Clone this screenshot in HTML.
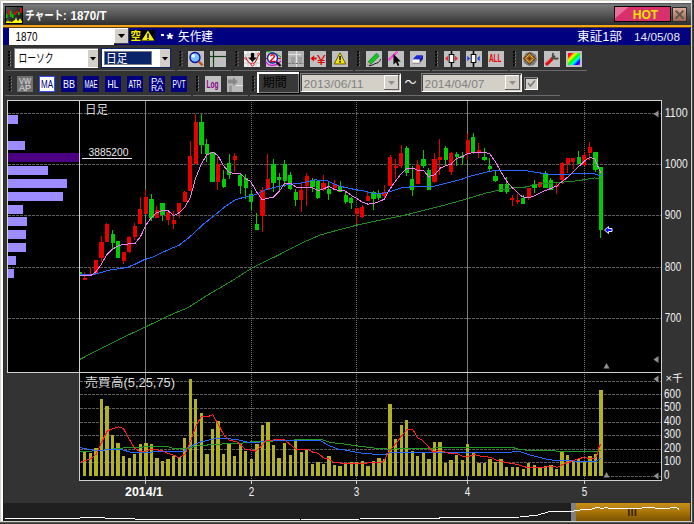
<!DOCTYPE html>
<html lang="ja"><head><meta charset="utf-8"><title>チャート: 1870/T</title>
<style>
html,body{margin:0;padding:0;background:#333;overflow:hidden}
svg{display:block}
.t{font-family:"Liberation Sans","Noto Sans CJK JP",sans-serif;}
</style></head><body>
<svg width="694" height="524" viewBox="0 0 694 524">
<rect x="0" y="0" width="694" height="524" fill="#d4d0c8" />
<rect x="1" y="1" width="691" height="521" fill="#ffffff" />
<rect x="3" y="3" width="688" height="518" fill="#333333" />
<rect x="691" y="0" width="3" height="524" fill="#d4d0c8" />
<rect x="0" y="521" width="694" height="3" fill="#d4d0c8" />
<rect x="692" y="0" width="1" height="524" fill="#484848" />
<rect x="693" y="0" width="1" height="524" fill="#303030" />
<rect x="0" y="522" width="694" height="1" fill="#585858" />
<rect x="0" y="523" width="694" height="1" fill="#303030" />
<rect x="690" y="3" width="1" height="518" fill="#2a2a2a" />
<rect x="3" y="3" width="1" height="518" fill="#2a2a2a" />
<defs><linearGradient id="tg" x1="0" y1="0" x2="0" y2="1"><stop offset="0" stop-color="#4a4a4a"/><stop offset="0.08" stop-color="#7a7a7a"/><stop offset="0.5" stop-color="#585858"/><stop offset="1" stop-color="#2e2e2e"/></linearGradient><linearGradient id="gold" x1="0" y1="0" x2="0" y2="1"><stop offset="0" stop-color="#c89018"/><stop offset="0.5" stop-color="#a87408"/><stop offset="1" stop-color="#7a5200"/></linearGradient><linearGradient id="rb" x1="0" y1="0" x2="1" y2="1"><stop offset="0" stop-color="#ff00c0"/><stop offset="0.15" stop-color="#ff0000"/><stop offset="0.32" stop-color="#ffff00"/><stop offset="0.5" stop-color="#00ff00"/><stop offset="0.65" stop-color="#00ffff"/><stop offset="0.82" stop-color="#0000ff"/><stop offset="1" stop-color="#ff00ff"/></linearGradient><linearGradient id="ig" x1="0" y1="0" x2="1" y2="1"><stop offset="0" stop-color="#555"/><stop offset="1" stop-color="#111"/></linearGradient></defs>
<rect x="3" y="3" width="688" height="22" fill="url(#tg)" />
<rect x="3" y="25" width="688" height="2" fill="#f0a418" />
<rect x="5" y="6" width="18" height="18" fill="#000" />
<rect x="6" y="7" width="16" height="16" fill="url(#ig)" />
<rect x="6" y="14" width="1.5" height="4" fill="#0c0" />
<rect x="8" y="10" width="1.5" height="5" fill="#f00" />
<rect x="10" y="11" width="1.5" height="6" fill="#0c0" />
<rect x="12" y="14" width="1.5" height="4" fill="#0c0" />
<rect x="14" y="12" width="1.5" height="3" fill="#f00" />
<rect x="16" y="11" width="1.5" height="2" fill="#f00" />
<rect x="18" y="12" width="1.5" height="3" fill="#0c0" />
<rect x="20" y="8" width="1.5" height="5" fill="#f00" />
<path d="M6,23 L6,21 L7,22 L8,20 L9,22 L10,21 L11,22 L12,22 L13,21 L15,20 L16,17 L17,20 L18,21 L19,20 L20,18 L21,20 L22,21 L22,23 Z" fill="#ff0"/>
<text class="t" x="25.3" y="19.8" font-size="12" fill="#fff" textLength="41" lengthAdjust="spacingAndGlyphs" font-weight="bold" >チャート:</text>
<text class="t" x="70.5" y="19.6" font-size="12" fill="#fff" textLength="36" lengthAdjust="spacingAndGlyphs" font-weight="bold" >1870/T</text>
<rect x="614" y="6" width="57" height="16" fill="#000" />
<rect x="615" y="7" width="55" height="14" fill="#d8306c" />
<path d="M615,7 L628.5,7 L615,18.5 Z" fill="#e8709a"/>
<text class="t" x="645.5" y="18.5" font-size="12" fill="#e8e400" textLength="25.5" lengthAdjust="spacingAndGlyphs" text-anchor="middle" font-weight="bold" >HOT</text>
<linearGradient id="cb" x1="0" y1="0" x2="0" y2="1"><stop offset="0" stop-color="#dcaa9c"/><stop offset="1" stop-color="#a06454"/></linearGradient>
<rect x="672" y="7" width="15" height="15" fill="#2c2c2c" />
<rect x="673" y="8" width="13" height="13" fill="url(#cb)" />
<path d="M675.7,10.6 L683.5,18.6 M683.5,10.6 L675.7,18.6" stroke="#5a5848" stroke-width="2" fill="none"/>
<rect x="3" y="27" width="687" height="18" fill="#000080" />
<rect x="3" y="27" width="687" height="1" fill="#604010" />
<rect x="9" y="28" width="105" height="17" fill="#fff" />
<text class="t" x="15.5" y="40.5" font-size="12.5" fill="#000" textLength="22" lengthAdjust="spacingAndGlyphs" >1870</text>
<rect x="114" y="28" width="15" height="16" fill="#d4d0c8" />
<rect x="114" y="28" width="15" height="1" fill="#fff" />
<rect x="114" y="28" width="1" height="16" fill="#fff" />
<rect x="128" y="28" width="1" height="16" fill="#404040" />
<rect x="114" y="43" width="15" height="1" fill="#404040" />
<path d="M118,34 L125,34 L121.5,38 Z" fill="#000"/>
<rect x="130" y="30" width="25" height="11" fill="#000" />
<text class="t" x="130.6" y="40" font-size="11" fill="#f4f000" textLength="10.5" lengthAdjust="spacingAndGlyphs" font-weight="bold" >空</text>
<path d="M147.9,30.5 L154.4,40.6 L141.6,40.6 Z" fill="#f4f000"/>
<rect x="147.2" y="33.6" width="1.6" height="4.5" fill="#000" />
<rect x="147.2" y="38.9" width="1.6" height="1.3" fill="#000" />
<rect x="161" y="34" width="3" height="2" fill="#fff" />
<text class="t" x="166.6" y="45.3" font-size="17" fill="#fff" font-weight="bold" >*</text>
<text class="t" x="178" y="40.5" font-size="12" fill="#fff" textLength="35" lengthAdjust="spacingAndGlyphs" >矢作建</text>
<text class="t" x="577" y="40.5" font-size="12" fill="#fff" textLength="45" lengthAdjust="spacingAndGlyphs" >東証1部</text>
<text class="t" x="634" y="40.5" font-size="11.5" fill="#e8e8e8" textLength="46" lengthAdjust="spacingAndGlyphs" >14/05/08</text>
<rect x="8.0" y="51.0" width="2" height="2" fill="#000" />
<rect x="10.0" y="51.6" width="0.9" height="1.8" fill="#8a8a8a" />
<rect x="8.0" y="54.2" width="2" height="2" fill="#000" />
<rect x="10.0" y="54.800000000000004" width="0.9" height="1.8" fill="#8a8a8a" />
<rect x="8.0" y="57.4" width="2" height="2" fill="#000" />
<rect x="10.0" y="58.0" width="0.9" height="1.8" fill="#8a8a8a" />
<rect x="8.0" y="60.6" width="2" height="2" fill="#000" />
<rect x="10.0" y="61.2" width="0.9" height="1.8" fill="#8a8a8a" />
<rect x="8.0" y="63.8" width="2" height="2" fill="#000" />
<rect x="10.0" y="64.39999999999999" width="0.9" height="1.8" fill="#8a8a8a" />
<rect x="14" y="48" width="84" height="20" fill="#fff" />
<rect x="14" y="48" width="84" height="1" fill="#808080" />
<rect x="14" y="48" width="1" height="20" fill="#808080" />
<text class="t" x="18.5" y="63" font-size="12" fill="#000" textLength="35" lengthAdjust="spacingAndGlyphs" >ローソク</text>
<rect x="88" y="50" width="10" height="17" fill="#d4d0c8" />
<path d="M90,57 L96,57 L93,60.5 Z" fill="#000"/>
<rect x="101" y="48" width="70" height="20" fill="#0a246a" />
<rect x="102" y="49" width="68" height="18" fill="#fff" />
<rect x="104" y="51" width="48" height="14" fill="#0a246a" />
<rect x="104.5" y="51.5" width="47" height="13" fill="none" stroke="#e8d8a0" stroke-width="1" stroke-dasharray="1 1"/>
<text class="t" x="106" y="62.5" font-size="12" fill="#fff" textLength="21.5" lengthAdjust="spacingAndGlyphs" >日足</text>
<rect x="160" y="49" width="10" height="18" fill="#d4d0c8" />
<path d="M162,57 L168,57 L165,60.5 Z" fill="#000"/>
<rect x="179.5" y="51.0" width="2" height="2" fill="#000" />
<rect x="181.5" y="51.6" width="0.9" height="1.8" fill="#8a8a8a" />
<rect x="179.5" y="54.2" width="2" height="2" fill="#000" />
<rect x="181.5" y="54.800000000000004" width="0.9" height="1.8" fill="#8a8a8a" />
<rect x="179.5" y="57.4" width="2" height="2" fill="#000" />
<rect x="181.5" y="58.0" width="0.9" height="1.8" fill="#8a8a8a" />
<rect x="179.5" y="60.6" width="2" height="2" fill="#000" />
<rect x="181.5" y="61.2" width="0.9" height="1.8" fill="#8a8a8a" />
<rect x="179.5" y="63.8" width="2" height="2" fill="#000" />
<rect x="181.5" y="64.39999999999999" width="0.9" height="1.8" fill="#8a8a8a" />
<g transform="translate(0,1)">
<rect x="188" y="50" width="16" height="16" fill="#c0c0c0" />
<circle cx="195" cy="56.5" r="5" fill="#78c0ff" stroke="#0808a0" stroke-width="1.3"/><circle cx="193.3" cy="54.8" r="1.9" fill="#e0f4ff"/><path d="M198.8,60.5 L202.5,64.3" stroke="#c05010" stroke-width="2.4"/>
<rect x="210" y="50" width="16" height="16" fill="#c0c0c0" />
<line x1="213.5" y1="50" x2="213.5" y2="66" stroke="#0c4010" stroke-width="1.2" />
<line x1="210" y1="55.5" x2="226" y2="55.5" stroke="#0c4010" stroke-width="1.2" />
</g>
<rect x="235.5" y="51.0" width="2" height="2" fill="#000" />
<rect x="237.5" y="51.6" width="0.9" height="1.8" fill="#8a8a8a" />
<rect x="235.5" y="54.2" width="2" height="2" fill="#000" />
<rect x="237.5" y="54.800000000000004" width="0.9" height="1.8" fill="#8a8a8a" />
<rect x="235.5" y="57.4" width="2" height="2" fill="#000" />
<rect x="237.5" y="58.0" width="0.9" height="1.8" fill="#8a8a8a" />
<rect x="235.5" y="60.6" width="2" height="2" fill="#000" />
<rect x="237.5" y="61.2" width="0.9" height="1.8" fill="#8a8a8a" />
<rect x="235.5" y="63.8" width="2" height="2" fill="#000" />
<rect x="237.5" y="64.39999999999999" width="0.9" height="1.8" fill="#8a8a8a" />
<g transform="translate(0,1)">
<rect x="244" y="50" width="16" height="16" fill="#f0f0f0" />
<line x1="244" y1="54" x2="260" y2="54" stroke="#b8b8b8" stroke-width="0.7" />
<line x1="248" y1="50" x2="248" y2="66" stroke="#b8b8b8" stroke-width="0.7" />
<line x1="244" y1="58" x2="260" y2="58" stroke="#b8b8b8" stroke-width="0.7" />
<line x1="252" y1="50" x2="252" y2="66" stroke="#b8b8b8" stroke-width="0.7" />
<line x1="244" y1="62" x2="260" y2="62" stroke="#b8b8b8" stroke-width="0.7" />
<line x1="256" y1="50" x2="256" y2="66" stroke="#b8b8b8" stroke-width="0.7" />
<path d="M245.5,57 Q250,64 252.5,63.5 Q256,62 259,52.5" stroke="#c00000" stroke-width="1" fill="none"/><path d="M250.8,52 L254.2,52 L254.2,56.5 L256.8,56.5 L252.5,61 L248.2,56.5 L250.8,56.5 Z" fill="#000"/><circle cx="252.6" cy="63.5" r="1.4" fill="#fff" stroke="#e00000" stroke-width="0.9"/><circle cx="245.6" cy="57" r="1" fill="#fff" stroke="#c00000" stroke-width="0.7"/><circle cx="258.6" cy="53" r="1" fill="#fff" stroke="#c00000" stroke-width="0.7"/>
<rect x="266" y="50" width="16" height="16" fill="#c0c0c0" />
<path d="M266,50.5 C270,50.5 276,52 281,56" stroke="#00a000" stroke-width="1" fill="none"/><path d="M266,57.5 L281,57.5" stroke="#e00000" stroke-width="0.9"/><path d="M266,61 C269,65.5 275,66 281,60" stroke="#e000e0" stroke-width="1.2" fill="none"/><circle cx="272.5" cy="57" r="5" fill="#f8f8ff" stroke="#1020b0" stroke-width="1.4"/><path d="M276.5,61 L280.5,65" stroke="#101010" stroke-width="2.4"/>
<text class="t" x="272.6" y="61" font-size="10.5" fill="#e00000" text-anchor="middle" font-weight="bold" >2</text>
<rect x="288" y="50" width="16" height="16" fill="#b4b4b4" />
<rect x="291" y="56" width="4" height="6" fill="#a0a0a0" />
<rect x="298" y="56" width="4" height="6" fill="#a0a0a0" />
<line x1="296.5" y1="50" x2="296.5" y2="66" stroke="#e4e4e4" stroke-width="1.1" />
<line x1="288.5" y1="53.5" x2="301" y2="53.5" stroke="#e4e4e4" stroke-width="1.1" />
<line x1="288.5" y1="62.5" x2="303.5" y2="62.5" stroke="#707070" stroke-width="1.2" stroke-dasharray="2.5 1"/>
<rect x="310" y="50" width="16" height="16" fill="#c0c0c0" />
<path d="M310.5,57.5 L314,54.5 L314,56.5 L316.5,56.5 L316.5,58.5 L314,58.5 L314,60.5 Z" fill="#e00000"/>
<text class="t" x="321.3" y="64.2" font-size="15.5" fill="#e00000" textLength="8.5" lengthAdjust="spacingAndGlyphs" text-anchor="middle" >¥</text>
<rect x="332" y="50" width="16" height="16" fill="#c0c0c0" />
<path d="M340,51.8 L345.8,63 L334.2,63 Z" fill="#f0e800" stroke="#706000" stroke-width="1" stroke-linejoin="round"/>
<rect x="339.3" y="55" width="1.5" height="4.2" fill="#000" />
<rect x="339.3" y="60" width="1.5" height="1.5" fill="#000" />
</g>
<rect x="357.2" y="51.0" width="2" height="2" fill="#000" />
<rect x="359.2" y="51.6" width="0.9" height="1.8" fill="#8a8a8a" />
<rect x="357.2" y="54.2" width="2" height="2" fill="#000" />
<rect x="359.2" y="54.800000000000004" width="0.9" height="1.8" fill="#8a8a8a" />
<rect x="357.2" y="57.4" width="2" height="2" fill="#000" />
<rect x="359.2" y="58.0" width="0.9" height="1.8" fill="#8a8a8a" />
<rect x="357.2" y="60.6" width="2" height="2" fill="#000" />
<rect x="359.2" y="61.2" width="0.9" height="1.8" fill="#8a8a8a" />
<rect x="357.2" y="63.8" width="2" height="2" fill="#000" />
<rect x="359.2" y="64.39999999999999" width="0.9" height="1.8" fill="#8a8a8a" />
<g transform="translate(0,1)">
<rect x="366" y="50" width="16" height="16" fill="#c0c0c0" />
<path d="M368.2,60.8 L376.5,52.2 L379.2,55 L370.8,63.4 Z" fill="#10c820" stroke="#108018" stroke-width="0.7"/><path d="M368.2,60.8 L370.8,63.4 L367.6,64.2 Z" fill="#f0c0b0" stroke="#604040" stroke-width="0.4"/><path d="M368.9,64.8 C372,65 374,62.5 377,62 C379,61.5 380,60 380.6,58" stroke="#101010" stroke-width="0.9" fill="none"/>
<rect x="388" y="50" width="16" height="16" fill="#c0c0c0" />
<path d="M388.3,59.3 L397.4,50.6" stroke="#ff20e0" stroke-width="2"/><path d="M388.3,59.3 L397.4,50.6" stroke="#fff" stroke-width="0.6" stroke-dasharray="1 1.2"/><path d="M393.5,53 L393.5,63.6 L396,61.2 L397.8,65 L399.3,64.3 L397.6,60.6 L400.8,60.6 Z" fill="#000"/>
<rect x="410" y="50" width="16" height="16" fill="#c0c0c0" />
<path d="M412.7,58.6 L416.5,54.2 L423,54.2 L419.5,58.6 Z" fill="#1828d8"/><path d="M419.5,58.6 L423,54.2 L423,57.8 L419.5,61.9 Z" fill="#0c1490"/><rect x="412.7" y="58.6" width="6.8" height="3.3" fill="#fff"/><path d="M412.7,62.3 L419.5,62.3 L423,58.2" stroke="#707070" stroke-width="0.7" fill="none"/>
</g>
<rect x="435.1" y="51.0" width="2" height="2" fill="#000" />
<rect x="437.1" y="51.6" width="0.9" height="1.8" fill="#8a8a8a" />
<rect x="435.1" y="54.2" width="2" height="2" fill="#000" />
<rect x="437.1" y="54.800000000000004" width="0.9" height="1.8" fill="#8a8a8a" />
<rect x="435.1" y="57.4" width="2" height="2" fill="#000" />
<rect x="437.1" y="58.0" width="0.9" height="1.8" fill="#8a8a8a" />
<rect x="435.1" y="60.6" width="2" height="2" fill="#000" />
<rect x="437.1" y="61.2" width="0.9" height="1.8" fill="#8a8a8a" />
<rect x="435.1" y="63.8" width="2" height="2" fill="#000" />
<rect x="437.1" y="64.39999999999999" width="0.9" height="1.8" fill="#8a8a8a" />
<g transform="translate(0,1)">
<rect x="444" y="50" width="16" height="16" fill="#c0c0c0" />
<line x1="451.5" y1="50" x2="451.5" y2="66" stroke="#000" stroke-width="1.6" />
<rect x="449.2" y="53.5" width="4.6" height="8" fill="#fff" stroke="#000" stroke-width="1"/>
<path d="M445,57.5 L448,54.8 L448,60.2 Z" fill="#ff2020"/><path d="M458,57.5 L455,54.8 L455,60.2 Z" fill="#ff2020"/>
<rect x="466" y="50" width="16" height="16" fill="#c0c0c0" />
<line x1="473.5" y1="50" x2="473.5" y2="66" stroke="#000" stroke-width="1.6" />
<rect x="471.2" y="53.5" width="4.6" height="8" fill="#fff" stroke="#000" stroke-width="1"/>
<path d="M470,57.5 L467.2,54.8 L467.2,60.2 Z" fill="#2040ff"/><path d="M477,57.5 L479.8,54.8 L479.8,60.2 Z" fill="#2040ff"/>
<rect x="488" y="50" width="16" height="16" fill="#c0c0c0" />
<text class="t" x="495.2" y="61.3" font-size="10.2" fill="#f00000" textLength="12.5" lengthAdjust="spacingAndGlyphs" text-anchor="middle" font-weight="bold" >ALL</text>
</g>
<rect x="513.0" y="51.0" width="2" height="2" fill="#000" />
<rect x="515.0" y="51.6" width="0.9" height="1.8" fill="#8a8a8a" />
<rect x="513.0" y="54.2" width="2" height="2" fill="#000" />
<rect x="515.0" y="54.800000000000004" width="0.9" height="1.8" fill="#8a8a8a" />
<rect x="513.0" y="57.4" width="2" height="2" fill="#000" />
<rect x="515.0" y="58.0" width="0.9" height="1.8" fill="#8a8a8a" />
<rect x="513.0" y="60.6" width="2" height="2" fill="#000" />
<rect x="515.0" y="61.2" width="0.9" height="1.8" fill="#8a8a8a" />
<rect x="513.0" y="63.8" width="2" height="2" fill="#000" />
<rect x="515.0" y="64.39999999999999" width="0.9" height="1.8" fill="#8a8a8a" />
<g transform="translate(0,1)">
<rect x="522" y="50" width="16" height="16" fill="#c0c0c0" />
<path d="M526,52 L531,51 L536,54 L537,59 L534,64 L529,65 L524,62 L523,57 Z" fill="#707880"/><path d="M529.5,51.5 L535.5,57.5 L529.5,63.5 L523.5,57.5 Z" fill="#a06018" stroke="#583008" stroke-width="0.8"/><path d="M526.5,54.5 L532.5,60.5 M532.5,54.5 L526.5,60.5" stroke="#e0b040" stroke-width="0.9"/><path d="M529.5,53.5 L533.5,57.5 L529.5,61.5 L525.5,57.5 Z" fill="none" stroke="#e8c050" stroke-width="0.7"/><rect x="528.3" y="56.3" width="2.4" height="2.4" fill="#503008"/>
<rect x="544" y="50" width="16" height="16" fill="#c0c0c0" />
<path d="M547,62.8 L551.8,58" stroke="#e01010" stroke-width="3.6" stroke-linecap="round"/><path d="M551.5,58.3 L555,54.8" stroke="#505050" stroke-width="2.2"/><path d="M553.6,52.2 A3,3 0 1 0 558.2,56.8" stroke="#484848" stroke-width="1.8" fill="none"/><path d="M546.6,61.5 L550.6,57.5" stroke="#ff8080" stroke-width="0.8"/>
<rect x="566" y="50" width="16" height="16" fill="#c0c0c0" />
<rect x="568" y="52" width="12" height="12" fill="url(#rb)" />
</g>
<line x1="5" y1="70.5" x2="175" y2="70.5" stroke="#6a6a6a" stroke-width="1" />
<line x1="177" y1="70.5" x2="231" y2="70.5" stroke="#6a6a6a" stroke-width="1" />
<line x1="233" y1="70.5" x2="353" y2="70.5" stroke="#6a6a6a" stroke-width="1" />
<line x1="355" y1="70.5" x2="430" y2="70.5" stroke="#6a6a6a" stroke-width="1" />
<line x1="432" y1="70.5" x2="508" y2="70.5" stroke="#6a6a6a" stroke-width="1" />
<line x1="510" y1="70.5" x2="587" y2="70.5" stroke="#6a6a6a" stroke-width="1" />
<rect x="8.8" y="76.0" width="2" height="2" fill="#000" />
<rect x="10.8" y="76.6" width="0.9" height="1.8" fill="#8a8a8a" />
<rect x="8.8" y="79.2" width="2" height="2" fill="#000" />
<rect x="10.8" y="79.8" width="0.9" height="1.8" fill="#8a8a8a" />
<rect x="8.8" y="82.4" width="2" height="2" fill="#000" />
<rect x="10.8" y="83.0" width="0.9" height="1.8" fill="#8a8a8a" />
<rect x="8.8" y="85.6" width="2" height="2" fill="#000" />
<rect x="10.8" y="86.19999999999999" width="0.9" height="1.8" fill="#8a8a8a" />
<rect x="8.8" y="88.8" width="2" height="2" fill="#000" />
<rect x="10.8" y="89.39999999999999" width="0.9" height="1.8" fill="#8a8a8a" />
<rect x="17" y="76" width="16" height="16" fill="#707070" />
<text class="t" x="25" y="83.7" font-size="8.5" fill="#e0e0e0" textLength="12" lengthAdjust="spacingAndGlyphs" text-anchor="middle" >VW</text>
<text class="t" x="25" y="90.7" font-size="8.5" fill="#e0e0e0" textLength="12" lengthAdjust="spacingAndGlyphs" text-anchor="middle" >AP</text>
<rect x="39" y="76" width="16" height="16" fill="#000080" />
<rect x="39.5" y="76.5" width="15" height="15" fill="#fff" stroke="#3050ff" stroke-width="1"/>
<rect x="41" y="78" width="12" height="12" fill="#fff" />
<text class="t" x="47" y="87.6" font-size="10.5" fill="#000080" textLength="12" lengthAdjust="spacingAndGlyphs" text-anchor="middle" >MA</text>
<rect x="61" y="76" width="16" height="16" fill="#000080" />
<text class="t" x="69" y="87.6" font-size="10.5" fill="#fff" textLength="12" lengthAdjust="spacingAndGlyphs" text-anchor="middle" >BB</text>
<rect x="83" y="76" width="16" height="16" fill="#000080" />
<text class="t" x="91" y="87.6" font-size="10.5" fill="#fff" textLength="13" lengthAdjust="spacingAndGlyphs" text-anchor="middle" >MAE</text>
<rect x="105" y="76" width="16" height="16" fill="#000080" />
<text class="t" x="113" y="87.6" font-size="10.5" fill="#fff" textLength="11" lengthAdjust="spacingAndGlyphs" text-anchor="middle" >HL</text>
<rect x="127" y="76" width="16" height="16" fill="#000080" />
<text class="t" x="135" y="87.6" font-size="10.5" fill="#fff" textLength="13" lengthAdjust="spacingAndGlyphs" text-anchor="middle" >ATR</text>
<rect x="149" y="76" width="16" height="16" fill="#000080" />
<text class="t" x="157" y="83.7" font-size="8.5" fill="#fff" textLength="12" lengthAdjust="spacingAndGlyphs" text-anchor="middle" >PA</text>
<text class="t" x="157" y="90.7" font-size="8.5" fill="#fff" textLength="12" lengthAdjust="spacingAndGlyphs" text-anchor="middle" >RA</text>
<rect x="171" y="76" width="16" height="16" fill="#000080" />
<text class="t" x="179" y="87.6" font-size="10.5" fill="#fff" textLength="13" lengthAdjust="spacingAndGlyphs" text-anchor="middle" >PVT</text>
<rect x="196.0" y="76.0" width="2" height="2" fill="#000" />
<rect x="198.0" y="76.6" width="0.9" height="1.8" fill="#8a8a8a" />
<rect x="196.0" y="79.2" width="2" height="2" fill="#000" />
<rect x="198.0" y="79.8" width="0.9" height="1.8" fill="#8a8a8a" />
<rect x="196.0" y="82.4" width="2" height="2" fill="#000" />
<rect x="198.0" y="83.0" width="0.9" height="1.8" fill="#8a8a8a" />
<rect x="196.0" y="85.6" width="2" height="2" fill="#000" />
<rect x="198.0" y="86.19999999999999" width="0.9" height="1.8" fill="#8a8a8a" />
<rect x="196.0" y="88.8" width="2" height="2" fill="#000" />
<rect x="198.0" y="89.39999999999999" width="0.9" height="1.8" fill="#8a8a8a" />
<rect x="205" y="76" width="16" height="16" fill="#c0c0c0" />
<text class="t" x="212.6" y="87.8" font-size="11" fill="#880088" textLength="12" lengthAdjust="spacingAndGlyphs" text-anchor="middle" font-weight="bold" >Log</text>
<rect x="227" y="76" width="16" height="16" fill="#b8b8b8" />
<path d="M228,79.5 L233,79.5 L233,77 L237.8,81.5 L233,86 L233,83.5 L228,83.5 Z" fill="#888888"/>
<rect x="229" y="85.5" width="3" height="6.5" fill="#989898" />
<line x1="236" y1="85.5" x2="243" y2="85.5" stroke="#e8e8e8" stroke-width="1" />
<rect x="252.2" y="76.0" width="2" height="2" fill="#000" />
<rect x="254.2" y="76.6" width="0.9" height="1.8" fill="#8a8a8a" />
<rect x="252.2" y="79.2" width="2" height="2" fill="#000" />
<rect x="254.2" y="79.8" width="0.9" height="1.8" fill="#8a8a8a" />
<rect x="252.2" y="82.4" width="2" height="2" fill="#000" />
<rect x="254.2" y="83.0" width="0.9" height="1.8" fill="#8a8a8a" />
<rect x="252.2" y="85.6" width="2" height="2" fill="#000" />
<rect x="254.2" y="86.19999999999999" width="0.9" height="1.8" fill="#8a8a8a" />
<rect x="252.2" y="88.8" width="2" height="2" fill="#000" />
<rect x="254.2" y="89.39999999999999" width="0.9" height="1.8" fill="#8a8a8a" />
<rect x="257" y="72" width="43" height="22" fill="#000" />
<rect x="257" y="72" width="42" height="21" fill="#fff" />
<rect x="259" y="74" width="40" height="19" fill="#808080" />
<rect x="259" y="74" width="39" height="18" fill="#383838" />
<text class="t" x="274.7" y="87.3" font-size="12" fill="#000" textLength="24" lengthAdjust="spacingAndGlyphs" text-anchor="middle" >期間</text>
<rect x="300" y="73" width="101" height="19" fill="#808080" />
<rect x="301" y="74" width="100" height="18" fill="#fff" />
<rect x="301" y="74" width="99" height="17" fill="#404040" />
<rect x="302" y="75" width="98" height="16" fill="#d4d0c8" />
<text class="t" x="303.5" y="87.5" font-size="11.5" fill="#808080" textLength="60" lengthAdjust="spacingAndGlyphs" >2013/06/11</text>
<rect x="384" y="75" width="15" height="15" fill="#d4d0c8" />
<rect x="384" y="75" width="15" height="1" fill="#fff" />
<rect x="384" y="75" width="1" height="15" fill="#fff" />
<rect x="398" y="75" width="1" height="15" fill="#606060" />
<rect x="384" y="89" width="15" height="1" fill="#606060" />
<path d="M388,81 L395,81 L391.5,85 Z" fill="#909090"/>
<text class="t" x="404.5" y="87" font-size="12" fill="#fff" textLength="12" lengthAdjust="spacingAndGlyphs" >～</text>
<rect x="421" y="73" width="101" height="19" fill="#808080" />
<rect x="422" y="74" width="100" height="18" fill="#fff" />
<rect x="422" y="74" width="99" height="17" fill="#404040" />
<rect x="423" y="75" width="98" height="16" fill="#d4d0c8" />
<text class="t" x="424.5" y="87.5" font-size="11.5" fill="#808080" textLength="60" lengthAdjust="spacingAndGlyphs" >2014/04/07</text>
<rect x="505" y="75" width="15" height="15" fill="#d4d0c8" />
<rect x="505" y="75" width="15" height="1" fill="#fff" />
<rect x="505" y="75" width="1" height="15" fill="#fff" />
<rect x="519" y="75" width="1" height="15" fill="#606060" />
<rect x="505" y="89" width="15" height="1" fill="#606060" />
<path d="M509,81 L516,81 L512.5,85 Z" fill="#909090"/>
<rect x="524" y="77" width="14" height="13" fill="#808080" />
<rect x="525" y="78" width="13" height="12" fill="#fff" />
<rect x="525" y="78" width="12" height="11" fill="#404040" />
<rect x="526" y="79" width="11" height="10" fill="#d4d0c8" />
<path d="M528,83 L530.5,86 L535,80.5" stroke="#808080" stroke-width="1.8" fill="none"/>
<line x1="5" y1="95.5" x2="191" y2="95.5" stroke="#6a6a6a" stroke-width="1" />
<line x1="193" y1="95.5" x2="248" y2="95.5" stroke="#6a6a6a" stroke-width="1" />
<line x1="250" y1="95.5" x2="560" y2="95.5" stroke="#6a6a6a" stroke-width="1" />
<rect x="7" y="100" width="655" height="273" fill="#000" />
<rect x="79" y="372" width="583" height="109" fill="#000" />
<g shape-rendering="crispEdges">
<line x1="8" y1="113.5" x2="661" y2="113.5" stroke="#5c5c5c" stroke-width="1" stroke-dasharray="3 1"/>
<line x1="8" y1="164.5" x2="661" y2="164.5" stroke="#5c5c5c" stroke-width="1" stroke-dasharray="3 1"/>
<line x1="8" y1="215.5" x2="661" y2="215.5" stroke="#5c5c5c" stroke-width="1" stroke-dasharray="3 1"/>
<line x1="8" y1="267.5" x2="661" y2="267.5" stroke="#5c5c5c" stroke-width="1" stroke-dasharray="3 1"/>
<line x1="8" y1="318.5" x2="661" y2="318.5" stroke="#5c5c5c" stroke-width="1" stroke-dasharray="3 1"/>
<line x1="80" y1="462.5" x2="661" y2="462.5" stroke="#5c5c5c" stroke-width="1" stroke-dasharray="3 1"/>
<line x1="80" y1="449.5" x2="661" y2="449.5" stroke="#5c5c5c" stroke-width="1" stroke-dasharray="3 1"/>
<line x1="80" y1="435.5" x2="661" y2="435.5" stroke="#5c5c5c" stroke-width="1" stroke-dasharray="3 1"/>
<line x1="80" y1="422.5" x2="661" y2="422.5" stroke="#5c5c5c" stroke-width="1" stroke-dasharray="3 1"/>
<line x1="80" y1="408.5" x2="661" y2="408.5" stroke="#5c5c5c" stroke-width="1" stroke-dasharray="3 1"/>
<line x1="80" y1="394.5" x2="661" y2="394.5" stroke="#5c5c5c" stroke-width="1" stroke-dasharray="3 1"/>
<line x1="80" y1="381.5" x2="661" y2="381.5" stroke="#5c5c5c" stroke-width="1" stroke-dasharray="3 1"/>
<line x1="607" y1="476.5" x2="661" y2="476.5" stroke="#5c5c5c" stroke-width="1" stroke-dasharray="3 1"/>
<line x1="145.5" y1="100" x2="145.5" y2="480" stroke="#808080" stroke-width="1" />
<line x1="467.5" y1="100" x2="467.5" y2="480" stroke="#808080" stroke-width="1" />
<line x1="251.5" y1="100" x2="251.5" y2="480" stroke="#707070" stroke-width="1" stroke-dasharray="1 1"/>
<line x1="356.5" y1="100" x2="356.5" y2="480" stroke="#707070" stroke-width="1" stroke-dasharray="1 1"/>
<line x1="584.5" y1="100" x2="584.5" y2="480" stroke="#707070" stroke-width="1" stroke-dasharray="1 1"/>
<rect x="8" y="115" width="10" height="9" fill="#9c8cff" />
<rect x="8" y="141" width="17" height="9" fill="#9c8cff" />
<rect x="8" y="153" width="71" height="9" fill="#4b0082" />
<rect x="8" y="166" width="40" height="9" fill="#9c8cff" />
<rect x="8" y="179" width="59" height="9" fill="#9c8cff" />
<rect x="8" y="192" width="55" height="9" fill="#9c8cff" />
<rect x="8" y="205" width="15" height="9" fill="#9c8cff" />
<rect x="8" y="217" width="19" height="9" fill="#9c8cff" />
<rect x="8" y="230" width="18" height="9" fill="#9c8cff" />
<rect x="8" y="243" width="18" height="9" fill="#9c8cff" />
<rect x="8" y="256" width="8" height="9" fill="#9c8cff" />
<rect x="8" y="269" width="6" height="9" fill="#9c8cff" />
<rect x="84" y="272" width="1" height="8" fill="#e60000" />
<rect x="83" y="278" width="4" height="2" fill="#e60000" />
<rect x="90" y="267" width="1" height="8" fill="#e60000" />
<rect x="88" y="270" width="5" height="0" fill="#e60000" />
<rect x="95" y="260" width="1" height="15" fill="#e60000" />
<rect x="94" y="260" width="4" height="13" fill="#e60000" />
<rect x="101" y="236" width="1" height="26" fill="#e60000" />
<rect x="99" y="242" width="5" height="16" fill="#e60000" />
<rect x="106" y="223" width="1" height="19" fill="#e60000" />
<rect x="105" y="224" width="4" height="18" fill="#e60000" />
<rect x="112" y="230" width="1" height="19" fill="#00cc00" />
<rect x="111" y="234" width="4" height="9" fill="#00cc00" />
<rect x="118" y="241" width="1" height="17" fill="#00cc00" />
<rect x="116" y="241" width="4" height="17" fill="#00cc00" />
<rect x="123" y="252" width="1" height="12" fill="#e60000" />
<rect x="122" y="252" width="4" height="9" fill="#e60000" />
<rect x="129" y="236" width="1" height="17" fill="#e60000" />
<rect x="127" y="237" width="4" height="15" fill="#e60000" />
<rect x="134" y="223" width="1" height="17" fill="#e60000" />
<rect x="133" y="226" width="4" height="11" fill="#e60000" />
<rect x="140" y="197" width="1" height="27" fill="#e60000" />
<rect x="138" y="209" width="4" height="15" fill="#e60000" />
<rect x="145" y="190" width="1" height="24" fill="#e60000" />
<rect x="144" y="197" width="4" height="17" fill="#e60000" />
<rect x="151" y="194" width="1" height="27" fill="#00cc00" />
<rect x="149" y="199" width="5" height="19" fill="#00cc00" />
<rect x="156" y="206" width="1" height="12" fill="#e60000" />
<rect x="155" y="210" width="4" height="8" fill="#e60000" />
<rect x="162" y="203" width="1" height="18" fill="#00cc00" />
<rect x="160" y="203" width="5" height="12" fill="#00cc00" />
<rect x="168" y="212" width="1" height="13" fill="#e60000" />
<rect x="166" y="212" width="4" height="8" fill="#e60000" />
<rect x="173" y="211" width="1" height="18" fill="#e60000" />
<rect x="172" y="220" width="4" height="4" fill="#e60000" />
<rect x="179" y="203" width="1" height="15" fill="#e60000" />
<rect x="177" y="203" width="4" height="9" fill="#e60000" />
<rect x="184" y="191" width="1" height="11" fill="#e60000" />
<rect x="183" y="192" width="4" height="10" fill="#e60000" />
<rect x="190" y="141" width="1" height="50" fill="#e60000" />
<rect x="188" y="156" width="4" height="35" fill="#e60000" />
<rect x="195" y="114" width="1" height="50" fill="#e60000" />
<rect x="194" y="122" width="4" height="42" fill="#e60000" />
<rect x="201" y="114" width="1" height="40" fill="#00cc00" />
<rect x="199" y="122" width="5" height="23" fill="#00cc00" />
<rect x="206" y="139" width="1" height="23" fill="#00cc00" />
<rect x="205" y="144" width="4" height="10" fill="#00cc00" />
<rect x="212" y="152" width="1" height="30" fill="#00cc00" />
<rect x="210" y="152" width="5" height="30" fill="#00cc00" />
<rect x="217" y="157" width="1" height="33" fill="#e60000" />
<rect x="216" y="164" width="4" height="18" fill="#e60000" />
<rect x="223" y="170" width="1" height="18" fill="#00cc00" />
<rect x="222" y="179" width="4" height="8" fill="#00cc00" />
<rect x="229" y="154" width="1" height="25" fill="#00cc00" />
<rect x="227" y="163" width="4" height="12" fill="#00cc00" />
<rect x="234" y="153" width="1" height="19" fill="#e60000" />
<rect x="233" y="156" width="4" height="4" fill="#e60000" />
<rect x="240" y="174" width="1" height="20" fill="#00cc00" />
<rect x="238" y="175" width="4" height="11" fill="#00cc00" />
<rect x="245" y="174" width="1" height="25" fill="#00cc00" />
<rect x="244" y="178" width="4" height="10" fill="#00cc00" />
<rect x="251" y="190" width="1" height="20" fill="#00cc00" />
<rect x="249" y="194" width="4" height="8" fill="#00cc00" />
<rect x="256" y="213" width="1" height="17" fill="#00cc00" />
<rect x="255" y="224" width="4" height="6" fill="#00cc00" />
<rect x="262" y="187" width="1" height="45" fill="#e60000" />
<rect x="260" y="190" width="5" height="26" fill="#e60000" />
<rect x="267" y="154" width="1" height="36" fill="#e60000" />
<rect x="266" y="179" width="4" height="11" fill="#e60000" />
<rect x="273" y="159" width="1" height="33" fill="#00cc00" />
<rect x="271" y="164" width="5" height="19" fill="#00cc00" />
<rect x="279" y="173" width="1" height="17" fill="#00cc00" />
<rect x="277" y="177" width="4" height="3" fill="#00cc00" />
<rect x="284" y="160" width="1" height="27" fill="#00cc00" />
<rect x="283" y="164" width="4" height="17" fill="#00cc00" />
<rect x="290" y="172" width="1" height="18" fill="#00cc00" />
<rect x="288" y="175" width="4" height="14" fill="#00cc00" />
<rect x="295" y="189" width="1" height="17" fill="#00cc00" />
<rect x="294" y="192" width="4" height="8" fill="#00cc00" />
<rect x="301" y="182" width="1" height="30" fill="#e60000" />
<rect x="299" y="190" width="4" height="10" fill="#e60000" />
<rect x="306" y="173" width="1" height="33" fill="#e60000" />
<rect x="305" y="176" width="4" height="10" fill="#e60000" />
<rect x="312" y="178" width="1" height="14" fill="#00cc00" />
<rect x="310" y="180" width="5" height="7" fill="#00cc00" />
<rect x="317" y="181" width="1" height="18" fill="#00cc00" />
<rect x="316" y="181" width="4" height="17" fill="#00cc00" />
<rect x="323" y="175" width="1" height="16" fill="#e60000" />
<rect x="321" y="183" width="5" height="7" fill="#e60000" />
<rect x="328" y="182" width="1" height="18" fill="#00cc00" />
<rect x="327" y="189" width="4" height="5" fill="#00cc00" />
<rect x="334" y="180" width="1" height="10" fill="#e60000" />
<rect x="333" y="184" width="4" height="4" fill="#e60000" />
<rect x="340" y="181" width="1" height="11" fill="#00cc00" />
<rect x="338" y="186" width="4" height="6" fill="#00cc00" />
<rect x="345" y="192" width="1" height="12" fill="#00cc00" />
<rect x="344" y="195" width="4" height="7" fill="#00cc00" />
<rect x="351" y="197" width="1" height="12" fill="#00cc00" />
<rect x="349" y="198" width="4" height="5" fill="#00cc00" />
<rect x="356" y="208" width="1" height="16" fill="#e60000" />
<rect x="355" y="208" width="4" height="6" fill="#e60000" />
<rect x="362" y="205" width="1" height="13" fill="#e60000" />
<rect x="360" y="207" width="4" height="10" fill="#e60000" />
<rect x="367" y="192" width="1" height="9" fill="#e60000" />
<rect x="366" y="196" width="4" height="5" fill="#e60000" />
<rect x="373" y="191" width="1" height="19" fill="#00cc00" />
<rect x="371" y="192" width="5" height="7" fill="#00cc00" />
<rect x="378" y="190" width="1" height="10" fill="#00cc00" />
<rect x="377" y="194" width="4" height="4" fill="#00cc00" />
<rect x="384" y="185" width="1" height="13" fill="#e60000" />
<rect x="382" y="192" width="5" height="4" fill="#e60000" />
<rect x="390" y="155" width="1" height="31" fill="#e60000" />
<rect x="388" y="157" width="4" height="29" fill="#e60000" />
<rect x="395" y="159" width="1" height="20" fill="#e60000" />
<rect x="394" y="166" width="4" height="2" fill="#e60000" />
<rect x="401" y="145" width="1" height="23" fill="#e60000" />
<rect x="399" y="153" width="4" height="13" fill="#e60000" />
<rect x="406" y="146" width="1" height="30" fill="#00cc00" />
<rect x="405" y="148" width="4" height="25" fill="#00cc00" />
<rect x="412" y="166" width="1" height="30" fill="#00cc00" />
<rect x="410" y="179" width="4" height="11" fill="#00cc00" />
<rect x="417" y="160" width="1" height="24" fill="#e60000" />
<rect x="416" y="165" width="4" height="19" fill="#e60000" />
<rect x="423" y="150" width="1" height="18" fill="#00cc00" />
<rect x="421" y="159" width="5" height="7" fill="#00cc00" />
<rect x="428" y="168" width="1" height="22" fill="#00cc00" />
<rect x="427" y="170" width="4" height="20" fill="#00cc00" />
<rect x="434" y="153" width="1" height="30" fill="#e60000" />
<rect x="432" y="159" width="5" height="23" fill="#e60000" />
<rect x="439" y="139" width="1" height="36" fill="#e60000" />
<rect x="438" y="157" width="4" height="3" fill="#e60000" />
<rect x="445" y="146" width="1" height="20" fill="#00cc00" />
<rect x="444" y="148" width="4" height="12" fill="#00cc00" />
<rect x="451" y="152" width="1" height="23" fill="#e60000" />
<rect x="449" y="153" width="4" height="19" fill="#e60000" />
<rect x="456" y="152" width="1" height="14" fill="#00cc00" />
<rect x="455" y="154" width="4" height="3" fill="#00cc00" />
<rect x="462" y="152" width="1" height="13" fill="#00cc00" />
<rect x="460" y="156" width="4" height="2" fill="#00cc00" />
<rect x="467" y="134" width="1" height="26" fill="#e60000" />
<rect x="466" y="140" width="4" height="14" fill="#e60000" />
<rect x="473" y="133" width="1" height="21" fill="#00cc00" />
<rect x="471" y="137" width="4" height="15" fill="#00cc00" />
<rect x="478" y="143" width="1" height="15" fill="#e60000" />
<rect x="477" y="150" width="4" height="2" fill="#e60000" />
<rect x="484" y="148" width="1" height="13" fill="#00cc00" />
<rect x="482" y="157" width="5" height="3" fill="#00cc00" />
<rect x="489" y="158" width="1" height="13" fill="#00cc00" />
<rect x="488" y="166" width="4" height="3" fill="#00cc00" />
<rect x="495" y="170" width="1" height="12" fill="#00cc00" />
<rect x="493" y="176" width="5" height="5" fill="#00cc00" />
<rect x="501" y="184" width="1" height="8" fill="#00cc00" />
<rect x="499" y="184" width="4" height="8" fill="#00cc00" />
<rect x="506" y="177" width="1" height="17" fill="#00cc00" />
<rect x="505" y="184" width="4" height="8" fill="#00cc00" />
<rect x="512" y="195" width="1" height="11" fill="#e60000" />
<rect x="510" y="198" width="4" height="2" fill="#e60000" />
<rect x="517" y="194" width="1" height="10" fill="#e60000" />
<rect x="516" y="200" width="4" height="2" fill="#e60000" />
<rect x="523" y="195" width="1" height="9" fill="#00cc00" />
<rect x="521" y="198" width="4" height="6" fill="#00cc00" />
<rect x="528" y="188" width="1" height="12" fill="#e60000" />
<rect x="527" y="188" width="4" height="10" fill="#e60000" />
<rect x="534" y="180" width="1" height="13" fill="#00cc00" />
<rect x="532" y="184" width="5" height="4" fill="#00cc00" />
<rect x="539" y="182" width="1" height="6" fill="#e60000" />
<rect x="538" y="182" width="4" height="5" fill="#e60000" />
<rect x="545" y="171" width="1" height="17" fill="#00cc00" />
<rect x="543" y="174" width="5" height="14" fill="#00cc00" />
<rect x="550" y="178" width="1" height="12" fill="#00cc00" />
<rect x="549" y="180" width="4" height="10" fill="#00cc00" />
<rect x="556" y="183" width="1" height="11" fill="#e60000" />
<rect x="555" y="185" width="4" height="2" fill="#e60000" />
<rect x="562" y="162" width="1" height="22" fill="#e60000" />
<rect x="560" y="163" width="4" height="17" fill="#e60000" />
<rect x="567" y="158" width="1" height="15" fill="#e60000" />
<rect x="566" y="158" width="4" height="6" fill="#e60000" />
<rect x="573" y="158" width="1" height="11" fill="#e60000" />
<rect x="571" y="158" width="4" height="4" fill="#e60000" />
<rect x="578" y="151" width="1" height="13" fill="#00cc00" />
<rect x="577" y="157" width="4" height="7" fill="#00cc00" />
<rect x="584" y="152" width="1" height="14" fill="#e60000" />
<rect x="582" y="155" width="4" height="10" fill="#e60000" />
<rect x="589" y="142" width="1" height="18" fill="#e60000" />
<rect x="588" y="147" width="4" height="6" fill="#e60000" />
<rect x="595" y="152" width="1" height="20" fill="#00cc00" />
<rect x="593" y="152" width="5" height="18" fill="#00cc00" />
<rect x="600" y="167" width="1" height="71" fill="#00cc00" />
<rect x="599" y="167" width="4" height="63" fill="#00cc00" />
<rect x="80" y="272" width="2" height="2" fill="#00cc00" />
<rect x="83" y="452" width="3" height="24" fill="#b2b220" />
<rect x="89" y="453" width="3" height="23" fill="#b2b220" />
<rect x="94" y="448" width="4" height="28" fill="#b2b220" />
<rect x="100" y="399" width="3" height="77" fill="#b2b220" />
<rect x="105" y="406" width="4" height="70" fill="#b2b220" />
<rect x="111" y="435" width="3" height="41" fill="#b2b220" />
<rect x="116" y="443" width="4" height="33" fill="#b2b220" />
<rect x="122" y="456" width="3" height="20" fill="#b2b220" />
<rect x="128" y="458" width="3" height="18" fill="#b2b220" />
<rect x="133" y="454" width="3" height="22" fill="#b2b220" />
<rect x="139" y="444" width="3" height="32" fill="#b2b220" />
<rect x="144" y="443" width="4" height="33" fill="#b2b220" />
<rect x="150" y="444" width="3" height="32" fill="#b2b220" />
<rect x="155" y="458" width="4" height="18" fill="#b2b220" />
<rect x="161" y="461" width="3" height="15" fill="#b2b220" />
<rect x="166" y="459" width="4" height="17" fill="#b2b220" />
<rect x="172" y="456" width="3" height="20" fill="#b2b220" />
<rect x="178" y="457" width="3" height="19" fill="#b2b220" />
<rect x="183" y="438" width="3" height="38" fill="#b2b220" />
<rect x="189" y="379" width="3" height="97" fill="#b2b220" />
<rect x="194" y="399" width="3" height="77" fill="#b2b220" />
<rect x="200" y="413" width="3" height="63" fill="#b2b220" />
<rect x="205" y="454" width="4" height="22" fill="#b2b220" />
<rect x="211" y="429" width="3" height="47" fill="#b2b220" />
<rect x="216" y="421" width="4" height="55" fill="#b2b220" />
<rect x="222" y="454" width="3" height="22" fill="#b2b220" />
<rect x="227" y="443" width="4" height="33" fill="#b2b220" />
<rect x="233" y="456" width="3" height="20" fill="#b2b220" />
<rect x="239" y="444" width="3" height="32" fill="#b2b220" />
<rect x="244" y="451" width="3" height="25" fill="#b2b220" />
<rect x="250" y="459" width="3" height="17" fill="#b2b220" />
<rect x="255" y="444" width="4" height="32" fill="#b2b220" />
<rect x="261" y="425" width="3" height="51" fill="#b2b220" />
<rect x="266" y="422" width="4" height="54" fill="#b2b220" />
<rect x="272" y="445" width="3" height="31" fill="#b2b220" />
<rect x="277" y="458" width="4" height="18" fill="#b2b220" />
<rect x="283" y="443" width="3" height="33" fill="#b2b220" />
<rect x="289" y="455" width="3" height="21" fill="#b2b220" />
<rect x="294" y="441" width="3" height="35" fill="#b2b220" />
<rect x="300" y="452" width="3" height="24" fill="#b2b220" />
<rect x="305" y="449" width="3" height="27" fill="#b2b220" />
<rect x="311" y="464" width="3" height="12" fill="#b2b220" />
<rect x="316" y="462" width="4" height="14" fill="#b2b220" />
<rect x="322" y="464" width="3" height="12" fill="#b2b220" />
<rect x="327" y="456" width="4" height="20" fill="#b2b220" />
<rect x="333" y="465" width="3" height="11" fill="#b2b220" />
<rect x="338" y="466" width="4" height="10" fill="#b2b220" />
<rect x="344" y="464" width="3" height="12" fill="#b2b220" />
<rect x="350" y="462" width="3" height="14" fill="#b2b220" />
<rect x="355" y="462" width="3" height="14" fill="#b2b220" />
<rect x="361" y="461" width="3" height="15" fill="#b2b220" />
<rect x="366" y="466" width="4" height="10" fill="#b2b220" />
<rect x="372" y="461" width="3" height="15" fill="#b2b220" />
<rect x="377" y="458" width="4" height="18" fill="#b2b220" />
<rect x="383" y="459" width="3" height="17" fill="#b2b220" />
<rect x="388" y="404" width="4" height="72" fill="#b2b220" />
<rect x="394" y="439" width="3" height="37" fill="#b2b220" />
<rect x="400" y="425" width="3" height="51" fill="#b2b220" />
<rect x="405" y="420" width="3" height="56" fill="#b2b220" />
<rect x="411" y="451" width="3" height="25" fill="#b2b220" />
<rect x="416" y="456" width="3" height="20" fill="#b2b220" />
<rect x="422" y="453" width="3" height="23" fill="#b2b220" />
<rect x="427" y="459" width="4" height="17" fill="#b2b220" />
<rect x="433" y="442" width="3" height="34" fill="#b2b220" />
<rect x="438" y="442" width="4" height="34" fill="#b2b220" />
<rect x="444" y="463" width="3" height="13" fill="#b2b220" />
<rect x="449" y="460" width="4" height="16" fill="#b2b220" />
<rect x="455" y="455" width="3" height="21" fill="#b2b220" />
<rect x="461" y="460" width="3" height="16" fill="#b2b220" />
<rect x="466" y="444" width="3" height="32" fill="#b2b220" />
<rect x="472" y="452" width="3" height="24" fill="#b2b220" />
<rect x="477" y="463" width="4" height="13" fill="#b2b220" />
<rect x="483" y="463" width="3" height="13" fill="#b2b220" />
<rect x="488" y="459" width="4" height="17" fill="#b2b220" />
<rect x="494" y="462" width="3" height="14" fill="#b2b220" />
<rect x="499" y="459" width="4" height="17" fill="#b2b220" />
<rect x="505" y="467" width="3" height="9" fill="#b2b220" />
<rect x="511" y="467" width="3" height="9" fill="#b2b220" />
<rect x="516" y="467" width="3" height="9" fill="#b2b220" />
<rect x="522" y="469" width="3" height="7" fill="#b2b220" />
<rect x="527" y="463" width="3" height="13" fill="#b2b220" />
<rect x="533" y="465" width="3" height="11" fill="#b2b220" />
<rect x="538" y="467" width="4" height="9" fill="#b2b220" />
<rect x="544" y="466" width="3" height="10" fill="#b2b220" />
<rect x="549" y="465" width="4" height="11" fill="#b2b220" />
<rect x="555" y="469" width="3" height="7" fill="#b2b220" />
<rect x="560" y="452" width="4" height="24" fill="#b2b220" />
<rect x="566" y="455" width="3" height="21" fill="#b2b220" />
<rect x="572" y="461" width="3" height="15" fill="#b2b220" />
<rect x="577" y="459" width="3" height="17" fill="#b2b220" />
<rect x="583" y="462" width="3" height="14" fill="#b2b220" />
<rect x="588" y="456" width="4" height="20" fill="#b2b220" />
<rect x="594" y="454" width="3" height="22" fill="#b2b220" />
<rect x="599" y="390" width="4" height="86" fill="#b2b220" />
</g>
<polyline fill="none" shape-rendering="crispEdges" stroke="#208a20" stroke-width="1" stroke-linejoin="round" points="79.7,359.5 98.3,349.7 121.7,338.1 145.0,327.2 168.4,315.9 187.8,307.7 207.3,295.3 230.6,281.6 252.0,268.0 277.3,255.6 300.7,243.5 320.1,235.0 336.7,230.4 356.6,225.2 376.5,220.9 393.8,217.5 405.2,215.1 420.8,211.1 441.5,205.9 457.1,201.6 469.2,198.1 486.5,192.9 498.6,190.3 512.4,187.8 527.3,186.9 534.2,184.3 549.8,183.4 560.1,182.2 570.5,181.7 582.6,180.0 594.7,177.9 600.8,179.1"/>
<polyline fill="none" shape-rendering="crispEdges" stroke="#2468ff" stroke-width="1" stroke-linejoin="round" points="80.0,274.5 91.4,274.7 100.9,272.6 109.6,270.0 118.2,268.8 126.9,267.5 135.5,264.0 144.2,259.7 152.8,257.1 161.5,252.8 170.1,248.9 178.7,245.5 187.4,238.9 197.3,230.0 202.5,224.9 214.6,215.3 225.0,206.7 235.3,199.8 245.7,196.8 256.1,194.6 266.5,189.4 276.8,186.8 287.2,184.7 298.6,183.4 307.3,181.7 314.2,179.9 326.3,180.3 331.5,182.9 340.1,186.3 348.8,188.1 355.7,189.8 362.6,190.6 373.0,193.2 383.4,193.2 390.3,191.5 400.7,188.1 410.4,186.9 431.1,186.9 441.5,184.3 451.9,181.7 462.2,179.1 469.2,176.5 479.5,173.9 489.9,171.3 496.8,170.1 524.7,170.1 529.0,171.3 541.1,173.1 553.2,174.8 561.9,174.8 572.3,173.9 589.5,173.1 596.5,174.3 600.8,176.0"/>
<polyline fill="none" shape-rendering="crispEdges" stroke="#f080f0" stroke-width="1" stroke-linejoin="round" points="80.2,275.2 91.4,275.2 95.8,271.8 100.9,264.9 107.0,254.5 112.2,249.3 118.2,245.8 125.1,244.1 134.7,243.8 140.7,236.3 145.9,225.1 151.1,218.2 156.3,213.0 161.5,210.9 168.4,210.9 173.6,215.6 178.7,213.0 185.2,206.7 190.4,197.2 195.6,178.2 201.6,163.5 206.8,154.8 212.9,152.2 218.0,155.7 223.2,165.2 229.3,172.6 235.3,173.5 240.5,173.8 245.7,179.0 250.9,181.6 256.1,191.1 262.1,199.8 268.2,198.1 273.4,197.2 279.4,191.1 284.6,183.4 290.7,183.4 296.1,187.2 301.2,187.5 312.5,187.5 317.7,190.6 323.7,188.9 328.9,186.3 335.0,189.8 345.3,191.0 351.4,195.5 356.6,198.4 361.8,201.9 367.8,204.1 373.0,203.6 378.2,201.9 384.2,199.3 389.4,189.8 395.5,181.1 400.7,174.2 406.0,169.1 412.1,167.9 417.3,170.1 423.3,170.1 428.5,176.5 434.6,174.8 440.6,167.9 445.8,165.6 451.0,164.4 456.2,158.7 462.2,156.6 467.4,154.0 473.5,152.3 484.7,152.3 489.9,154.0 496.0,162.7 501.2,172.2 506.3,180.8 512.4,187.8 515.2,190.3 520.4,195.5 525.6,197.8 532.5,196.7 538.5,193.8 544.6,190.9 550.6,188.6 556.7,186.0 561.9,181.7 567.9,177.0 573.1,171.8 579.2,166.1 584.4,160.9 589.5,157.5 594.7,158.4 598.2,167.0 600.8,173.1"/>
<polyline fill="none" shape-rendering="crispEdges" stroke="#209a20" stroke-width="1" stroke-linejoin="round" points="80.0,451.8 99.2,450.5 121.4,448.1 135.5,447.1 167.8,446.7 173.9,448.5 188.0,448.5 196.0,446.1 217.1,444.1 239.3,443.7 247.4,442.1 271.6,441.1 299.8,439.7 320.0,439.0 330.1,442.5 345.0,444.1 356.1,445.7 374.3,448.1 388.4,449.1 432.8,448.5 436.8,447.5 513.4,447.7 520.4,449.7 534.6,450.7 562.8,451.1 595.1,451.8 600.7,450.5"/>
<polyline fill="none" shape-rendering="crispEdges" stroke="#2468ff" stroke-width="1" stroke-linejoin="round" points="80.0,447.7 95.2,450.5 111.3,449.7 121.4,449.7 133.5,452.8 145.6,452.2 183.9,451.1 191.0,446.1 200.1,442.1 213.1,439.0 225.2,438.4 237.3,439.7 247.4,442.1 257.5,442.5 267.5,440.5 295.8,440.5 320.0,440.5 328.1,445.1 338.1,449.1 348.1,450.5 358.2,452.8 374.3,454.2 385.4,454.8 388.4,452.8 480.0,452.8 520.4,451.8 528.5,454.6 546.7,459.2 556.7,460.8 566.8,460.2 576.9,461.6 595.1,461.8 600.7,458.6"/>
<polyline fill="none" shape-rendering="crispEdges" stroke="#ff2020" stroke-width="1" stroke-linejoin="round" points="80.0,462.2 90.1,459.2 96.2,454.2 101.2,443.1 107.3,431.0 113.3,428.4 118.4,426.9 123.4,428.4 128.5,438.0 134.5,448.1 140.6,451.8 145.6,451.1 151.7,449.1 161.7,450.5 167.8,453.2 173.9,455.2 178.9,457.8 184.9,454.2 191.0,440.1 196.0,425.9 201.1,416.9 207.1,416.9 212.7,414.8 218.1,423.9 224.2,435.6 229.2,440.1 237.3,442.1 245.3,449.1 255.4,451.1 260.5,447.1 265.5,441.1 271.6,440.1 277.6,439.7 283.7,439.0 289.7,444.1 295.8,449.1 303.9,449.7 307.9,449.1 312.9,452.2 318.0,453.2 324.0,458.2 328.1,458.6 334.1,462.6 345.0,463.3 356.1,463.7 373.3,462.6 383.4,461.8 389.4,451.1 395.5,444.1 401.5,436.0 407.6,429.0 412.6,429.0 417.7,438.0 422.7,440.5 428.8,447.1 433.8,452.2 439.9,450.5 445.9,452.2 451.0,453.8 457.0,453.2 463.1,456.8 468.1,456.8 474.0,454.6 482.1,456.6 490.2,457.2 496.2,460.2 506.3,462.6 516.4,464.3 526.5,467.3 544.6,467.3 550.7,465.9 557.8,467.3 562.8,464.3 568.9,462.2 578.9,458.6 585.0,457.2 589.0,458.6 595.1,458.2 597.5,454.2 599.1,447.1 600.7,444.5"/>
<g shape-rendering="crispEdges">
<rect x="7" y="100" width="655" height="1" fill="#d0d0d0" />
<rect x="7" y="100" width="1" height="273" fill="#d0d0d0" />
<rect x="7" y="372" width="655" height="1" fill="#d0d0d0" />
<rect x="79" y="100" width="1" height="381" fill="#d0d0d0" />
<rect x="661" y="100" width="1" height="381" fill="#d0d0d0" />
<rect x="79" y="480" width="583" height="1" fill="#d0d0d0" />
<rect x="145" y="480" width="1" height="4" fill="#d0d0d0" />
<rect x="251" y="480" width="1" height="4" fill="#d0d0d0" />
<rect x="356" y="480" width="1" height="4" fill="#d0d0d0" />
<rect x="467" y="480" width="1" height="4" fill="#d0d0d0" />
<rect x="584" y="480" width="1" height="4" fill="#d0d0d0" />
</g>
<text class="t" x="85" y="113.6" font-size="12" fill="#d8d8d8" textLength="23" lengthAdjust="spacingAndGlyphs" >日足</text>
<text class="t" x="88.5" y="156" font-size="10" fill="#e8e8e8" textLength="40" lengthAdjust="spacingAndGlyphs" >3885200</text>
<line x1="82" y1="158.5" x2="132" y2="158.5" stroke="#e8e8e8" stroke-width="1" />
<text class="t" x="85" y="387.2" font-size="12" fill="#dcdcdc" textLength="90" lengthAdjust="spacingAndGlyphs" >売買高(5,25,75)</text>
<text class="t" x="664.7" y="116.8" font-size="12" fill="#f0f0f0" textLength="23" lengthAdjust="spacingAndGlyphs" >1100</text>
<text class="t" x="664.7" y="167.8" font-size="12" fill="#f0f0f0" textLength="23" lengthAdjust="spacingAndGlyphs" >1000</text>
<text class="t" x="664.7" y="218.8" font-size="12" fill="#f0f0f0" textLength="16.5" lengthAdjust="spacingAndGlyphs" >900</text>
<text class="t" x="664.7" y="270.8" font-size="12" fill="#f0f0f0" textLength="16.5" lengthAdjust="spacingAndGlyphs" >800</text>
<text class="t" x="664.7" y="321.8" font-size="12" fill="#f0f0f0" textLength="16.5" lengthAdjust="spacingAndGlyphs" >700</text>
<text class="t" x="665.5" y="381.5" font-size="10.5" fill="#f0f0f0" textLength="17.5" lengthAdjust="spacingAndGlyphs" >×千</text>
<text class="t" x="664" y="479.4" font-size="12" fill="#f0f0f0" textLength="5.4" lengthAdjust="spacingAndGlyphs" >0</text>
<text class="t" x="664" y="465.29999999999995" font-size="12" fill="#f0f0f0" textLength="16.8" lengthAdjust="spacingAndGlyphs" >100</text>
<text class="t" x="664" y="451.79999999999995" font-size="12" fill="#f0f0f0" textLength="16.8" lengthAdjust="spacingAndGlyphs" >200</text>
<text class="t" x="664" y="438.29999999999995" font-size="12" fill="#f0f0f0" textLength="16.8" lengthAdjust="spacingAndGlyphs" >300</text>
<text class="t" x="664" y="424.79999999999995" font-size="12" fill="#f0f0f0" textLength="16.8" lengthAdjust="spacingAndGlyphs" >400</text>
<text class="t" x="664" y="411.29999999999995" font-size="12" fill="#f0f0f0" textLength="16.8" lengthAdjust="spacingAndGlyphs" >500</text>
<text class="t" x="664" y="397.79999999999995" font-size="12" fill="#f0f0f0" textLength="16.8" lengthAdjust="spacingAndGlyphs" >600</text>
<text class="t" x="125" y="495.8" font-size="13" fill="#fff" textLength="38" lengthAdjust="spacingAndGlyphs" font-weight="bold" >2014/1</text>
<text class="t" x="251.5" y="495.7" font-size="12.5" fill="#f0f0f0" textLength="5.5" lengthAdjust="spacingAndGlyphs" text-anchor="middle" >2</text>
<text class="t" x="356.5" y="495.7" font-size="12.5" fill="#f0f0f0" textLength="5.5" lengthAdjust="spacingAndGlyphs" text-anchor="middle" >3</text>
<text class="t" x="467.5" y="495.7" font-size="12.5" fill="#f0f0f0" textLength="5.5" lengthAdjust="spacingAndGlyphs" text-anchor="middle" >4</text>
<text class="t" x="584.5" y="495.7" font-size="12.5" fill="#f0f0f0" textLength="5.5" lengthAdjust="spacingAndGlyphs" text-anchor="middle" >5</text>
<path d="M653.5,114 L658.5,110.5 L658.5,117.5 Z" fill="#909090"/>
<path d="M653.5,359.5 L658.5,356.0 L658.5,363.0 Z" fill="#909090"/>
<path d="M653.5,379 L658.5,375.5 L658.5,382.5 Z" fill="#909090"/>
<path d="M653.5,476 L658.5,472.5 L658.5,479.5 Z" fill="#909090"/>
<path d="M606.5,363 L609.5,368.5 L603.5,368.5 Z" fill="#909090"/>
<path d="M606.5,472 L609.5,477.5 L603.5,477.5 Z" fill="#909090"/>
<path d="M604.5,230 L608.5,226.5 L608.5,228.5 L612,228.5 L612,231.5 L608.5,231.5 L608.5,233.5 Z" fill="#1010ff" stroke="#fff" stroke-width="0.9"/>
<rect x="3" y="503" width="687" height="18" fill="#1f1f1f" />
<rect x="571" y="503" width="119" height="18" fill="url(#gold)" />
<rect x="571" y="503" width="5" height="18" fill="#808080" />
<rect x="628" y="509" width="1.8" height="7" fill="#3a2800" />
<rect x="631.3" y="509" width="1.8" height="7" fill="#3a2800" />
<rect x="634.6" y="509" width="1.8" height="7" fill="#3a2800" />
<polyline fill="none" shape-rendering="crispEdges" stroke="#ffffff" stroke-width="1" stroke-linejoin="round" points="5.0,518.0 80.0,518.0 85.0,517.0 100.0,517.0 105.0,518.0 130.0,518.0 135.0,519.0 300.0,519.0 320.0,519.5 520.0,517.0 538.0,515.0 548.0,512.0 571.0,511.5 577.0,510.5 585.0,509.0 590.0,510.0 597.0,507.0 602.0,508.5 606.0,507.5 612.0,509.0 620.0,508.0 635.0,508.5 650.0,507.5 660.0,508.5 670.0,508.0 676.0,507.0 679.0,509.5"/>
</svg>
</body></html>
